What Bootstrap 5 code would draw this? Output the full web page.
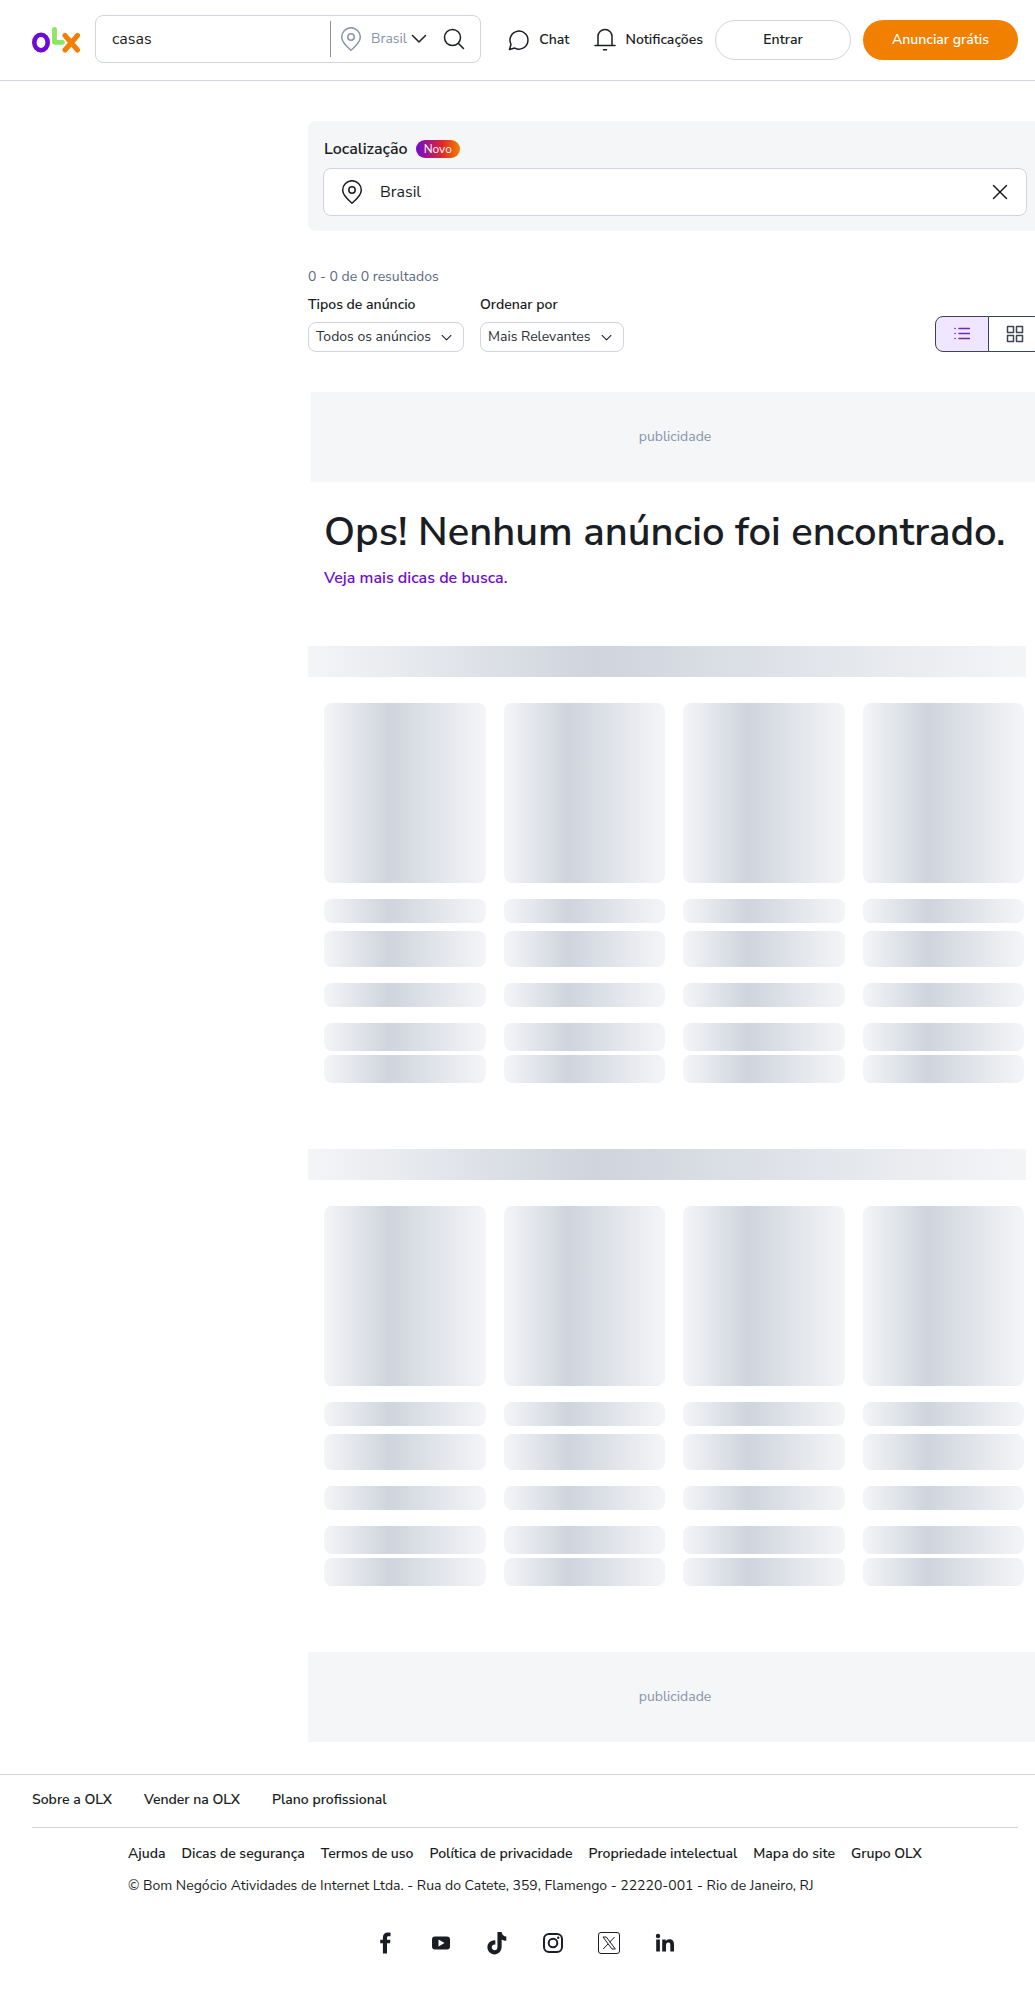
<!DOCTYPE html>
<html lang="pt-BR">
<head>
<meta charset="utf-8">
<meta name="viewport" content="width=device-width, initial-scale=1">
<title>casas | OLX</title>
<link rel="stylesheet" href="https://cdn.jsdelivr.net/npm/bootstrap@5.3.0/dist/css/bootstrap.min.css">
<style>
:root{--ink:#1a1d23;--line:#cfd4dd;--surface:#f4f6f8;--muted:#8994a9;--purple:#6e0ad6;--orange:#f28000}
body{font-family:"Nunito Sans",Nunito,"Open Sans",sans-serif;font-size:14px;line-height:20px;color:var(--ink)}
svg{display:block;flex:none}
.ico{fill:none;stroke:currentColor;stroke-width:1.5;stroke-linecap:round;stroke-linejoin:round}
a{color:inherit;text-decoration:none}
a:hover{text-decoration:underline}
.wrap{padding-left:32px;padding-right:17px}
.topbar{height:81px;border-bottom:1px solid var(--line)}
.search{height:48px;margin:0 0 2px 15px;width:386px;border:1px solid var(--line);border-radius:8px}
.search input{font-size:16px;color:var(--ink);padding:0 16px;height:100%}
.search input:focus,.place input:focus{box-shadow:none}
.where{height:36px;padding:0 0 0 8px;margin-right:16px;border:0;border-left:1px solid var(--muted);color:var(--muted);font-size:14px}
.where .chev{color:var(--ink)}
.iconbtn{border:0;background:none;padding:0;color:var(--ink)}
.go{margin-right:15px}
.pill{height:40px;margin-left:12px;border-radius:20px;font-size:14px;line-height:20px;font-weight:600;padding:0}
.pill-line{width:136px;border:1px solid var(--line);color:var(--ink)}
.pill-main{width:155px;background:var(--orange);color:#fff}
.pill-main:hover{background:#df7400;color:#fff}
.side{width:308px;flex:none}
.results{margin-right:-7px;min-width:0}
.place-box{margin-top:40px;padding:16px 15px 15px;border-radius:8px;background:var(--surface)}
.place-head{padding-left:1px;margin-bottom:7px}
.place-box label{font-size:16px;line-height:24px}
.novo{height:18px;padding:0 8px;border-radius:9px;font-size:12px;line-height:18px;color:#fff;background:linear-gradient(90deg,var(--purple),#e22828 60%,var(--orange))}
.place{height:48px;padding:0 18px 0 16px;border:1px solid var(--line);border-radius:8px;background:#fff}
.place input{font-size:16px;padding:0;color:var(--ink)}
.count{margin-top:36px;color:#5e6a82}
.pick-label{margin-bottom:7px}
.pick{height:30px;padding:0 32px 0 7px;border:1px solid var(--line);border-radius:8px;font-size:14px;line-height:20px;color:#2a2f38;background-position:right 10px center;background-size:13px 13px;background-image:url("data:image/svg+xml,%3csvg xmlns='http://www.w3.org/2000/svg' viewBox='0 0 16 16'%3e%3cpath fill='none' stroke='%231a1d23' stroke-width='1.3' stroke-linecap='round' stroke-linejoin='round' d='m2.500 5.500 5.500 5.500 5.500-5.500'/%3e%3c/svg%3e")}
.view{height:36px}
.view .btn{width:54px;padding:0;border:1px solid #3c4453;color:#3c4453;border-radius:8px}
.view .btn.active{background:#f0e6ff;color:#6e2bb0;border-color:#3c4453}
.ad{height:90px;background:var(--surface);color:var(--muted)}
.ad-top{margin:40px 3px 0}
.ad-last{margin-top:66px}
.empty{padding:26px 0 0 16px}
.oops{font-size:40px;line-height:48px;font-weight:600;margin-bottom:10px}
.tips{font-size:16px;line-height:24px;color:var(--purple)}
.shade{background:linear-gradient(90deg,#f4f5f7,#cfd4dd 40%,#f4f5f7)}
.strip{height:31px;margin:66px 16px 26px 0}
.empty + .strip{margin-top:56px}
.tiles{display:grid;grid-template-columns:repeat(4,1fr);gap:18px;padding:0 18px 0 16px}
.tiles .shade{border-radius:8px}
.t-photo{height:180px;margin-bottom:16px}
.t-a{height:24px;margin-bottom:8px}
.t-b{height:36px;margin-bottom:16px}
.t-c{height:24px;margin-bottom:16px}
.t-d{height:28px;margin-bottom:4px}
.t-e{height:28px}
footer{margin-top:32px;border-top:1px solid var(--line)}
.foot-main{gap:32px;padding:15px 0 17px;border-bottom:1px solid var(--line)}
.foot-legal{padding:16px 0 0 96px}
.social{gap:32px;margin-top:35px;padding-bottom:36px}
</style>
<script src="https://cdn.jsdelivr.net/npm/bootstrap@5.3.0/dist/js/bootstrap.bundle.min.js"></script>
</head>
<body>
<svg class="d-none" aria-hidden="true">
  <symbol id="pin" viewBox="0 0 24 24"><path d="M12 23.200C8.600 20.200 2.700 15.800 2.700 10a9.300 9.300 0 0 1 18.600 0c0 5.800-5.900 10.200-9.300 13.200z"/><circle cx="12" cy="10" r="3.200"/></symbol>
</svg>

<header class="topbar wrap d-flex align-items-center">
  <a href="#" aria-label="OLX">
    <svg width="48" height="26" viewBox="0 0 48 26"><ellipse cx="9" cy="15.500" rx="6.700" ry="7.700" fill="none" stroke="#6e0ad6" stroke-width="4.600"/><path d="M22.500 2.500v12.800h8" fill="none" stroke="#8ce563" stroke-width="4.800" stroke-linejoin="round" stroke-linecap="round"/><path d="m33 8.500 12.500 14.500m0-14.500L33 23" fill="none" stroke="#f28000" stroke-width="5" stroke-linecap="round"/></svg>
  </a>
  <form class="search d-flex align-items-center" role="search">
    <input class="form-control border-0 bg-transparent flex-fill" type="text" value="casas" aria-label="Buscar">
    <button type="button" class="where d-flex align-items-center bg-transparent gap-2">
      <svg class="ico" width="24" height="24"><use href="#pin"/></svg><span class="d-flex align-items-center gap-1">Brasil
      <svg class="ico chev" width="16" height="16" viewBox="0 0 16 16"><path d="m1.500 4.500 6.500 6.500 6.500-6.500"/></svg></span>
    </button>
    <button type="submit" class="iconbtn go" aria-label="Pesquisar"><svg class="ico" width="22" height="22" viewBox="0 0 22 22"><circle cx="9.500" cy="9.500" r="8"/><path d="m15.500 15.500 5 5"/></svg></button>
  </form>
  <a href="#" class="d-flex align-items-center fw-semibold ms-auto gap-2">
    <svg class="ico" width="24" height="24" viewBox="0 0 24 24"><path d="M2.500 21.500 4 16.300a9 9 0 1 1 3.800 3.800z"/></svg>Chat</a>
  <a href="#" class="d-flex align-items-center fw-semibold ms-4 gap-2">
    <svg class="ico" width="24" height="24" viewBox="0 0 24 24"><path d="M2 17.500h20M5 17V8.500a7 7 0 0 1 14 0V17M10.500 21.800h3"/></svg>Notificações</a>
  <button type="button" class="btn pill pill-line">Entrar</button>
  <button type="button" class="btn pill pill-main">Anunciar grátis</button>
</header>

<div class="d-flex overflow-hidden">
  <div class="side"></div>
  <main class="results flex-fill">
    <section class="place-box">
      <div class="place-head d-flex align-items-center gap-2">
        <label class="fw-semibold" for="local">Localização</label><span class="novo">Novo</span>
      </div>
      <div class="place d-flex align-items-center gap-3">
        <svg class="ico" width="24" height="24"><use href="#pin"/></svg>
        <input id="local" class="form-control border-0" type="text" value="Brasil">
        <button type="button" class="iconbtn" aria-label="Limpar"><svg class="ico" width="16" height="16" viewBox="0 0 16 16"><path d="m1.500 1.500 13 13m0-13-13 13"/></svg></button>
      </div>
    </section>

    <p class="count mb-2">0 - 0 de 0 resultados</p>
    <div class="d-flex align-items-end">
      <div class="me-3">
        <label class="pick-label d-block fw-semibold" for="tipos">Tipos de anúncio</label>
        <select id="tipos" class="form-select pick"><option>Todos os anúncios</option></select>
      </div>
      <div>
        <label class="pick-label d-block fw-semibold" for="ordem">Ordenar por</label>
        <select id="ordem" class="form-select pick"><option>Mais Relevantes</option></select>
      </div>
      <div class="btn-group view ms-auto" role="group" aria-label="Visualização">
        <button type="button" class="btn active d-flex align-items-center justify-content-center" aria-label="Lista"><svg class="ico" width="16" height="16" viewBox="0 0 16 16"><path d="M5 2.500h10.500M5 7.500h10.500M5 12.500h10.500M1 2.500h.1M1 7.500h.1M1 12.500h.1"/></svg></button>
        <button type="button" class="btn d-flex align-items-center justify-content-center" aria-label="Grade"><svg class="ico" width="18" height="18" viewBox="0 0 18 18"><path d="M1.500 1.500h6v6h-6zM10.500 1.500h6v6h-6zM1.500 10.500h6v6h-6zM10.500 10.500h6v6h-6z"/></svg></button>
      </div>
    </div>

    <div class="ad ad-top d-flex align-items-center justify-content-center">publicidade</div>
    <div class="empty">
      <h1 class="oops">Ops! Nenhum anúncio foi encontrado.</h1>
      <div class="d-flex"><a href="#" class="tips fw-semibold">Veja mais dicas de busca.</a></div>
    </div>

    <div class="shade strip"></div>
    <div class="tiles">
      <div><div class="shade t-photo"></div><div class="shade t-a"></div><div class="shade t-b"></div><div class="shade t-c"></div><div class="shade t-d"></div><div class="shade t-e"></div></div>
      <div><div class="shade t-photo"></div><div class="shade t-a"></div><div class="shade t-b"></div><div class="shade t-c"></div><div class="shade t-d"></div><div class="shade t-e"></div></div>
      <div><div class="shade t-photo"></div><div class="shade t-a"></div><div class="shade t-b"></div><div class="shade t-c"></div><div class="shade t-d"></div><div class="shade t-e"></div></div>
      <div><div class="shade t-photo"></div><div class="shade t-a"></div><div class="shade t-b"></div><div class="shade t-c"></div><div class="shade t-d"></div><div class="shade t-e"></div></div>
    </div>
    <div class="shade strip"></div>
    <div class="tiles">
      <div><div class="shade t-photo"></div><div class="shade t-a"></div><div class="shade t-b"></div><div class="shade t-c"></div><div class="shade t-d"></div><div class="shade t-e"></div></div>
      <div><div class="shade t-photo"></div><div class="shade t-a"></div><div class="shade t-b"></div><div class="shade t-c"></div><div class="shade t-d"></div><div class="shade t-e"></div></div>
      <div><div class="shade t-photo"></div><div class="shade t-a"></div><div class="shade t-b"></div><div class="shade t-c"></div><div class="shade t-d"></div><div class="shade t-e"></div></div>
      <div><div class="shade t-photo"></div><div class="shade t-a"></div><div class="shade t-b"></div><div class="shade t-c"></div><div class="shade t-d"></div><div class="shade t-e"></div></div>
    </div>
    <div class="ad ad-last d-flex align-items-center justify-content-center">publicidade</div>
  </main>
</div>

<footer class="wrap">
  <nav class="foot-main d-flex flex-wrap fw-semibold" aria-label="Institucional">
    <a href="#">Sobre a OLX</a><a href="#">Vender na OLX</a><a href="#">Plano profissional</a>
  </nav>
  <div class="foot-legal">
    <nav class="d-flex flex-wrap gap-3 fw-semibold" aria-label="Legal">
      <a href="#">Ajuda</a><a href="#">Dicas de segurança</a><a href="#">Termos de uso</a><a href="#">Política de privacidade</a><a href="#">Propriedade intelectual</a><a href="#">Mapa do site</a><a href="#">Grupo OLX</a>
    </nav>
    <p class="mt-2 pt-1 mb-0">© Bom Negócio Atividades de Internet Ltda. - Rua do Catete, 359, Flamengo - 22220-001 - Rio de Janeiro, RJ</p>
  </div>
  <div class="social d-flex justify-content-center">
    <a href="#" aria-label="Facebook"><svg width="24" height="24" viewBox="0 0 24 24" fill="currentColor"><path d="M14 22.500V12.300h3l.4-3.500H14V6.900c0-1 .3-1.700 1.700-1.700h1.800V1.700c-.5-.1-1.500-.2-2.600-.2-2.900 0-5 1.600-5 4.700v2.600H7.200v3.500h2.700v10.200z"/></svg></a>
    <a href="#" aria-label="YouTube"><svg width="24" height="24" viewBox="0 0 24 24" fill="currentColor"><path fill-rule="evenodd" d="M6 5.500h12a3 3 0 0 1 3 3v7a3 3 0 0 1-3 3H6a3 3 0 0 1-3-3v-7a3 3 0 0 1 3-3zm3.500 3v7l6-3.500z"/></svg></a>
    <a href="#" aria-label="TikTok"><svg width="24" height="24" viewBox="0 0 16 16" fill="currentColor"><path d="M8.300.600h2.800c.1 1.600 1.200 2.900 3.100 3.100v2.800c-1.100 0-2.200-.3-3.100-.9v4.800c0 3.100-2.100 5.200-4.800 5.200-2.600 0-4.700-2.100-4.700-4.700 0-2.900 2.400-5 5.300-4.700v2.900c-1.300-.3-2.400.6-2.400 1.800 0 1.100.8 1.900 1.900 1.900 1.200 0 1.900-.8 1.900-2.200z"/></svg></a>
    <a href="#" aria-label="Instagram"><svg width="24" height="24" viewBox="0 0 24 24" fill="none" stroke="currentColor" stroke-width="2"><rect x="3" y="3" width="18" height="18" rx="5"/><circle cx="12" cy="12" r="4.300"/><circle cx="17.200" cy="6.800" r="1.200" fill="currentColor" stroke="none"/></svg></a>
    <a href="#" aria-label="X"><svg width="24" height="24" viewBox="0 0 24 24" fill="none" stroke="currentColor" stroke-width="1"><rect x="1.500" y="1.500" width="21" height="21" rx="2.500"/><path d="M6 6h3.300l9 12H15zM17.500 6l-5 5.300M11 13l-4.800 5"/></svg></a>
    <a href="#" aria-label="LinkedIn"><svg width="24" height="24" viewBox="0 0 24 24" fill="currentColor"><circle cx="5" cy="5" r="2.200"/><path d="M3.200 8.500h3.700v12H3.200zM9.200 8.500h3.500v1.600c.6-1 1.800-1.900 3.700-1.900 3.800 0 4.600 2.500 4.600 5.700v6.600h-3.700v-5.900c0-1.400 0-3.100-1.900-3.100-2 0-2.400 1.500-2.400 3.100v5.900H9.200z"/></svg></a>
  </div>
</footer>
</body>
</html>
